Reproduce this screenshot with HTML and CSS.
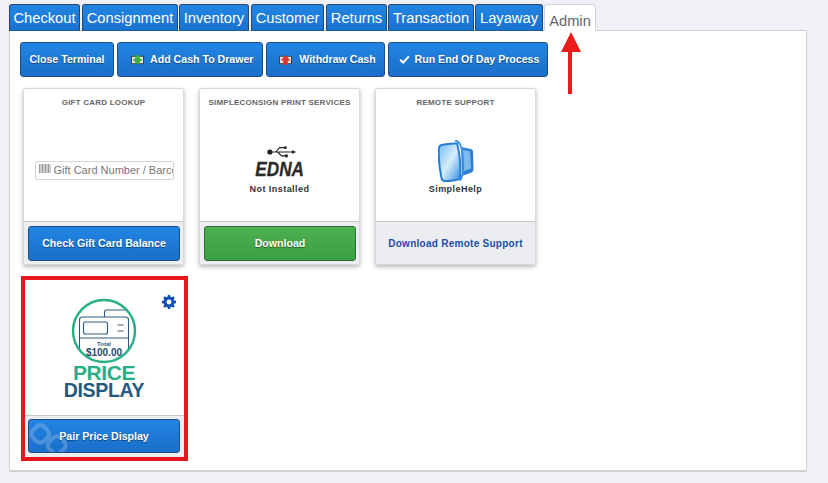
FILE: index.html
```html
<!DOCTYPE html>
<html lang="en">
<head>
<meta charset="utf-8">
<title>Admin</title>
<link rel="stylesheet" href="styles.css">
</head>
<body>
<nav class="tabs">
  <a class="tab t1">Checkout</a>
  <a class="tab t2">Consignment</a>
  <a class="tab t3">Inventory</a>
  <a class="tab t4">Customer</a>
  <a class="tab t5">Returns</a>
  <a class="tab t6">Transaction</a>
  <a class="tab t7">Layaway</a>
  <a class="tab active">Admin</a>
</nav>
<main class="panel">
  <div class="actions">
    <button class="btn b1">Close Terminal</button>
    <button class="btn b2">
      <svg class="cash" viewBox="0 0 14 10"><rect x=".5" y="1" width="13" height="8" fill="#dfe6da" stroke="#3b3b3b" stroke-width="1"/><path d="M4.500 0h5v4h3L7 10 1.500 4h3z" fill="#3fae3a"/></svg>
      Add Cash To Drawer
    </button>
    <button class="btn b3">
      <svg class="cash" viewBox="0 0 14 10"><rect x=".5" y="1" width="13" height="8" fill="#dfe6da" stroke="#3b3b3b" stroke-width="1"/><path d="M7 0l5.500 5.500h-3V10h-5V5.500h-3z" fill="#e0332c"/></svg>
      Withdraw Cash
    </button>
    <button class="btn b4">
      <svg class="check" viewBox="0 0 12 10"><path d="M1.200 5.200l3.300 3.200 6.300-6.800" fill="none" stroke="#fff" stroke-width="2.200"/></svg>
      Run End Of Day Process
    </button>
  </div>
  <section class="cards">
    <article class="card">
      <h3 class="card-title">GIFT CARD LOOKUP</h3>
      <div class="card-body">
        <div class="lookup">
          <svg class="barcode" viewBox="0 0 12 9"><path d="M.5 0v9M2 0v9M3.500 0v9M5 0v9M6.500 0v9M8 0v9M9.500 0v9M11 0v9" stroke="#9a9a9a" stroke-width="1"/></svg>
          <input class="lookup-input" type="text" placeholder="Gift Card Number / Barcode">
        </div>
      </div>
      <div class="card-foot"><button class="btn wide">Check Gift Card Balance</button></div>
    </article>
    <article class="card">
      <h3 class="card-title">SIMPLECONSIGN PRINT SERVICES</h3>
      <div class="card-body logo-body edna-body">
        <svg class="usb" viewBox="0 0 30 12"><circle cx="3" cy="6" r="2.700" fill="#222"/><path d="M3 6h25M9 6l4-4.500h5M11 6l4 4h4" fill="none" stroke="#222" stroke-width="1.100"/><path d="M26 4l4 2-4 2z" fill="#222"/><circle cx="19" cy="1.500" r="1.500" fill="#222"/><rect x="18.500" y="8.500" width="3" height="3" fill="#222"/></svg>
        <div class="edna">EDNA</div>
        <p class="logo-label">Not Installed</p>
      </div>
      <div class="card-foot"><button class="btn wide green">Download</button></div>
    </article>
    <article class="card">
      <h3 class="card-title">REMOTE SUPPORT</h3>
      <div class="card-body logo-body sh-body">
        <svg class="sh" viewBox="0 0 36 42">
          <defs>
            <linearGradient id="shg" x1="0" y1="0" x2="1" y2="1"><stop offset="0" stop-color="#6fbdf0"/><stop offset=".5" stop-color="#d5eefb"/><stop offset="1" stop-color="#2f8de0"/></linearGradient>
          </defs>
          <path d="M23 7l10 2q2 .5 2 2.500l.5 18q0 2-2 3L24 36z" fill="#2f7fd2"/>
          <path d="M25 10l7 1.500 1 17-8 3z" fill="#7cbcec"/>
          <path d="M3.500 5Q12 3 19 3.500q4.500 17 3 35.500-8 2.500-15 2-3 0-3.500-3Q0 22 1 8q.3-2.500 2.500-3z" fill="url(#shg)" stroke="#2a80d8" stroke-width="2"/>
          <path d="M17 .5q7 .5 8 18t-3 22" fill="none" stroke="#3a8fe0" stroke-width="1.800"/>
        </svg>
        <p class="logo-label">SimpleHelp</p>
      </div>
      <div class="card-foot plain"><a class="foot-link">Download Remote Support</a></div>
    </article>
    <article class="card marked">
      <svg class="gear" viewBox="0 0 16 16"><path d="M6.700 0h2.600l.4 2.100 1.300.6 1.800-1.200 1.800 1.800-1.200 1.800.6 1.300 2 .3v2.600l-2 .4-.6 1.300 1.200 1.800-1.800 1.800-1.800-1.200-1.300.6-.4 2H6.700l-.4-2-1.300-.6-1.800 1.200-1.800-1.800 1.200-1.800-.6-1.300-2-.4V6.700l2-.3.600-1.300-1.200-1.800 1.800-1.800L5 2.700l1.300-.6zM8 5.200a2.800 2.800 0 100 5.600 2.800 2.800 0 000-5.600z" fill="#1450b4" fill-rule="evenodd"/></svg>
      <div class="price-body">
        <svg class="price-art" viewBox="0 0 90 104">
          <path d="M45.500 20v-5q0-2 2-2h21M20.500 53V23q0-3 3-3h43q3 0 3 3v30M20.500 41h49" fill="none" stroke="#2f5a80" stroke-width="1.100"/>
          <rect x="24.500" y="25" width="24" height="12" rx="2" fill="none" stroke="#2f5a80" stroke-width="1.100"/>
          <path d="M58.500 28h6M58.500 34h6" stroke="#2f5a80" stroke-width="1.100"/>
          <circle cx="45" cy="34" r="31" fill="none" stroke="#27b084" stroke-width="2.400"/>
          <text class="art-total" x="45" y="49" text-anchor="middle">Total</text>
          <text class="art-amount" x="45" y="59" text-anchor="middle">$100.00</text>
          <text class="art-price" x="45" y="83" text-anchor="middle">PRICE</text>
          <text class="art-display" x="45" y="100" text-anchor="middle">DISPLAY</text>
        </svg>
      </div>
      <div class="card-foot">
        <button class="btn wide pair">
          <svg class="chain" viewBox="0 0 40 30"><g fill="none" stroke="#9cc0e8" stroke-opacity=".38" stroke-width="4"><rect x="3" y="3" width="15" height="15" rx="5" transform="rotate(45 10.500 10.500)"/><rect x="19" y="14" width="15" height="15" rx="5" transform="rotate(45 26.500 21.500)"/></g></svg>
          <span>Pair Price Display</span>
        </button>
      </div>
    </article>
  </section>
</main>
<svg class="arrow" viewBox="0 0 20 62"><path d="M10 0L20 20H11V62H7V20H0z" fill="#ea1c1c"/></svg>
</body>
</html>
```

FILE: styles.css
```css
* { box-sizing: border-box; }
html, body { margin: 0; height: 100%; }
body {
  position: relative;
  width: 828px;
  height: 483px;
  overflow: hidden;
  background: #f0f0f6;
  font-family: "Liberation Sans", Arial, sans-serif;
  padding: 4px 21px 0 9px;
}
.tabs { display: flex; height: 27px; position: relative; z-index: 1; }
.tab {
  display: block;
  height: 27px;
  padding-top: 5px;
  text-align: center;
  font-size: 14.7px;
  line-height: 17px;
  color: #fff;
  background: linear-gradient(#2285e3, #1a72d0);
  border: 1px solid #25486e;
  border-bottom-color: #1a5a9c;
  border-radius: 3px 3px 0 0;
  margin-right: 1px;
}
.t1 { width: 71px; margin-right: 2px; }
.t2 { width: 96px; }
.t3 { width: 70px; margin-right: 2px; }
.t4 { width: 73px; margin-right: 2px; }
.t5 { width: 61px; }
.t6 { width: 86px; }
.t7 { width: 68px; }
.tab.active {
  width: 52px;
  padding-top: 8px;
  color: #666;
  background: #fff;
  border: 1px solid #d4d4d4;
  border-bottom: 0;
}
.panel {
  height: 442px;
  margin-top: -1px;
  background: #fff;
  border: 1px solid #d2d2d2;
  border-bottom: 2px solid #d2d2d2;
  padding: 11px 10px 0 10px;
}
.actions { display: flex; gap: 3px; }
.btn {
  display: block;
  height: 35px;
  padding: 0 0 1px;
  font-family: "Liberation Sans", Arial, sans-serif;
  font-size: 10.6px;
  font-weight: 700;
  color: #fff;
  text-shadow: 0 1px 1px rgba(0, 0, 0, .45);
  background: linear-gradient(#2285e3, #1a6fca);
  border: 1px solid #1d4f86;
  border-radius: 3px;
}
.b1 { width: 94px; }
.b2 { width: 146px; padding-left: 4px; }
.b3 { width: 119px; padding-left: 4px; }
.b4 { width: 160px; padding-left: 2px; }
.cash { width: 13px; height: 10px; vertical-align: -2px; margin-right: 4px; }
.check { width: 11px; height: 9px; vertical-align: -1px; margin-right: 2px; }
.cards {
  display: grid;
  grid-template-columns: repeat(3, 161px);
  grid-auto-rows: 177px;
  column-gap: 15px;
  row-gap: 15px;
  margin: 11px 0 0 3px;
}
.card {
  position: relative;
  display: flex;
  flex-direction: column;
  background: #fff;
  border: 1px solid #d8d8d8;
  border-radius: 2px;
  box-shadow: 0 2px 4px rgba(0, 0, 0, .28);
}
.card-title {
  margin: 0;
  padding-top: 8px;
  height: 20px;
  font-size: 8px;
  line-height: 11px;
  font-weight: 700;
  letter-spacing: .22px;
  text-align: center;
  color: #666;
  white-space: nowrap;
}
.card-body { flex: 1; display: flex; align-items: center; justify-content: center; }
.logo-body { flex-direction: column; justify-content: flex-start; }
.edna-body { padding-top: 37px; }
.sh-body { padding-top: 31px; }
.lookup {
  width: 139px;
  height: 19px;
  margin: 10px 0 0 1px;
  display: flex;
  align-items: center;
  overflow: hidden;
  border: 1px solid #d4d4d4;
  border-radius: 2px;
  padding-left: 3px;
}
.lookup-input {
  flex: 1;
  min-width: 0;
  height: 17px;
  padding: 0;
  border: 0;
  outline: 0;
  background: transparent;
  font-family: "Liberation Sans", Arial, sans-serif;
  font-size: 11px;
  color: #777;
}
.lookup-input::placeholder { color: #777; opacity: 1; }
.barcode { width: 12px; height: 9px; flex: none; margin: -3px 3px 0 0; }
.usb { width: 29px; height: 12px; display: block; margin-left: 4px; }
.edna {
  height: 18px;
  margin-top: 2px;
  font-size: 19.5px;
  line-height: 18px;
  font-weight: 700;
  font-style: italic;
  color: #2a2a2a;
  transform: scaleX(.88);
  -webkit-text-stroke: .3px #2a2a2a;
}
.sh { width: 36px; height: 42px; display: block; }
.edna-body .logo-label { margin-top: 5px; }
.logo-label {
  margin: 1px 0 0;
  font-size: 9px;
  line-height: 12px;
  font-weight: 700;
  letter-spacing: .45px;
  color: #333;
}
.card-foot {
  height: 43px;
  flex: none;
  padding: 4px 3px 0 4px;
  background: #ecedf0;
  border-top: 1px solid #c8c8c8;
}
.card-foot.plain {
  text-align: center;
  padding: 0;
  line-height: 40px;
}
.foot-link { font-size: 10px; font-weight: 700; letter-spacing: .27px; color: #1a4fa8; }
.wide { width: 100%; }
.green {
  background: linear-gradient(#4cb050, #3d9e45);
  border-color: #2d6b34;
}
.marked { border: 0; border-radius: 0; box-shadow: none; }
.marked::after {
  content: "";
  position: absolute;
  inset: -4px -4px -4px -2px;
  border: 4px solid #e8161c;
  pointer-events: none;
}
.marked .card-foot { height: 42px; padding: 3px 4px 0 5px; }
.gear { position: absolute; top: 15px; right: 8px; width: 14px; height: 14px; }
.price-body { flex: 1; display: flex; justify-content: center; padding-top: 17px; }
.price-art { width: 90px; height: 104px; display: block; margin-left: 1px; }
.art-total { font: 700 6px "Liberation Sans", Arial, sans-serif; fill: #2f5a80; }
.art-amount { font: 700 10px "Liberation Sans", Arial, sans-serif; fill: #1f4a70; }
.art-price { font: 700 21px "Liberation Sans", Arial, sans-serif; fill: #27b084; letter-spacing: -.4px; }
.art-display { font: 700 19.5px "Liberation Sans", Arial, sans-serif; fill: #24597f; letter-spacing: -.3px; }
.pair { position: relative; overflow: hidden; height: 34px; }
.chain { position: absolute; left: 0; bottom: -2px; width: 42px; height: 31px; }
.pair span { position: relative; }
.arrow { position: absolute; left: 561px; top: 32px; width: 20px; height: 62px; z-index: 2; }
```
